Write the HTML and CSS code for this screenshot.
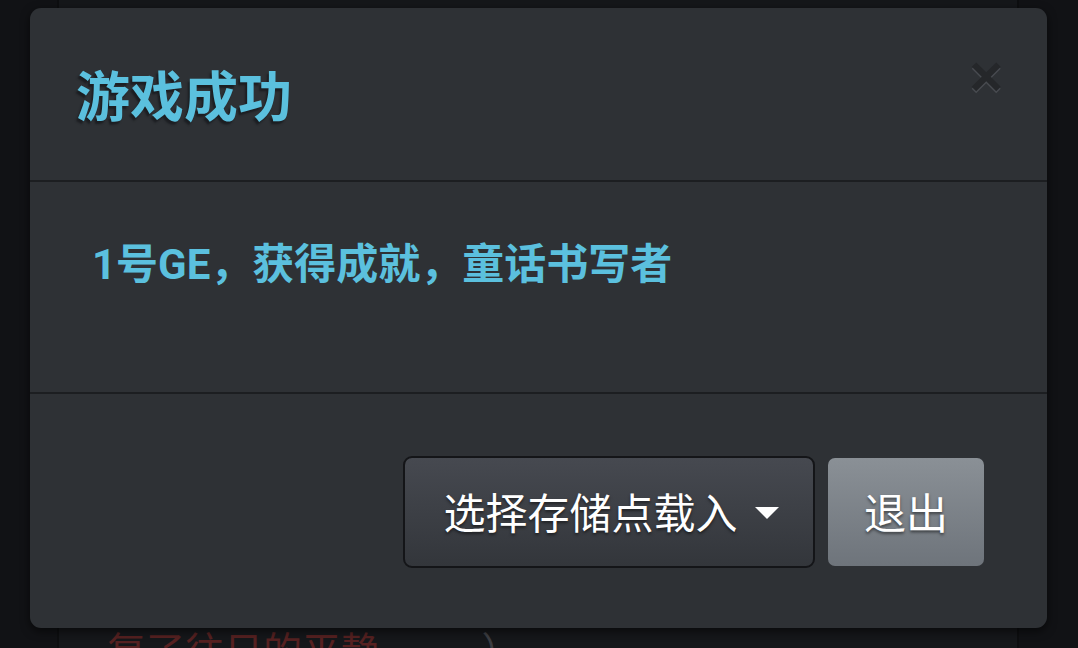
FILE: index.html
```html
<!DOCTYPE html>
<html lang="zh-CN">
<head>
<meta charset="utf-8">
<title>游戏成功</title>
<link rel="stylesheet" href="styles.css">
</head>
<body>
<div class="page">
  <div class="column">
    <p class="story">复了往日的平静。<span class="paren">）</span></p>
  </div>
</div>
<div class="modal">
  <div class="modal-header">
    <h4 class="modal-title">游戏成功</h4>
    <button class="close" type="button">×</button>
  </div>
  <div class="modal-body">
    <p class="message">1号GE，获得成就，童话书写者</p>
  </div>
  <div class="modal-footer">
    <button class="btn btn-dropdown" type="button">选择存储点载入<span class="caret"></span></button>
    <button class="btn btn-exit" type="button">退出</button>
  </div>
</div>
</body>
</html>
```
FILE: styles.css
```css
html, body {
  margin: 0;
  padding: 0;
  width: 1078px;
  height: 648px;
  overflow: hidden;
  background: #111215;
  font-family: Roboto, "Noto Sans CJK SC", sans-serif;
}

.page {
  display: flex;
  height: 648px;
  padding-left: 57px;
}

.column {
  width: 962px;
  height: 648px;
  background: #15171a;
  border-left: 2px solid #0d0e10;
  border-right: 2px solid #0d0e10;
  box-sizing: border-box;
}

.story {
  margin: 0;
  padding: 629px 0 0 48px;
  font-size: 39px;
  line-height: 1.2;
  color: #562121;
  white-space: nowrap;
}

.paren {
  margin-left: 82px;
  color: #3c3d42;
}

.modal {
  position: absolute;
  left: 30px;
  top: 8px;
  width: 1017px;
  height: 620px;
  background: #2e3135;
  border-radius: 11px;
  box-shadow: 0 3px 10px rgba(0, 0, 0, 0.6);
  display: flex;
  flex-direction: column;
}

.modal-header {
  height: 174px;
  flex: none;
  box-sizing: border-box;
  border-bottom: 2px solid #1c1e21;
  display: flex;
  align-items: center;
  justify-content: space-between;
  padding: 0 44px 0 46px;
}

.modal-title {
  margin: 0;
  font-family: "Noto Sans CJK SC", sans-serif;
  font-size: 54px;
  font-weight: 700;
  line-height: 1;
  color: #5bc0de;
  text-shadow: -2px 3px 2px #1c1e22;
}

.close {
  border: 0;
  background: none;
  padding: 0;
  margin-top: -36px;
  font-family: "Liberation Sans", Arial, sans-serif;
  font-weight: 700;
  font-size: 58px;
  line-height: 1;
  color: #25272a;
  text-shadow: 0 2px 0 #484b50;
}

.modal-body {
  height: 212px;
  flex: none;
  box-sizing: border-box;
  border-bottom: 2px solid #1c1e21;
  padding: 62px 0 0 62px;
}

.message {
  margin: 0;
  font-family: Roboto, "Noto Sans CJK SC", sans-serif;
  font-size: 42px;
  font-weight: 700;
  line-height: 1;
  color: #5bc0de;
}

.modal-footer {
  flex: 1;
  display: flex;
  align-items: center;
  justify-content: flex-end;
  gap: 13px;
  padding: 2px 63px 0 0;
}

.btn {
  font-family: "Noto Sans CJK SC", sans-serif;
  font-size: 42px;
  color: #ffffff;
  text-shadow: 0 2px 3px rgba(0, 0, 0, 0.5);
  display: flex;
  align-items: center;
  justify-content: center;
  box-sizing: border-box;
}

.btn-dropdown {
  width: 412px;
  height: 112px;
  border: 2px solid #141518;
  border-radius: 9px;
  background: linear-gradient(#464950, #33363b);
  padding: 0 0 4px 4px;
}

.caret {
  display: inline-block;
  width: 0;
  height: 0;
  margin-left: 17px;
  margin-top: 6px;
  border-left: 12px solid transparent;
  border-right: 12px solid transparent;
  border-top: 12px solid #ffffff;
}

.btn-exit {
  width: 156px;
  height: 108px;
  border: 0;
  border-radius: 7px;
  background: linear-gradient(#8a9096, #6e747b);
  padding-bottom: 4px;
}
```
